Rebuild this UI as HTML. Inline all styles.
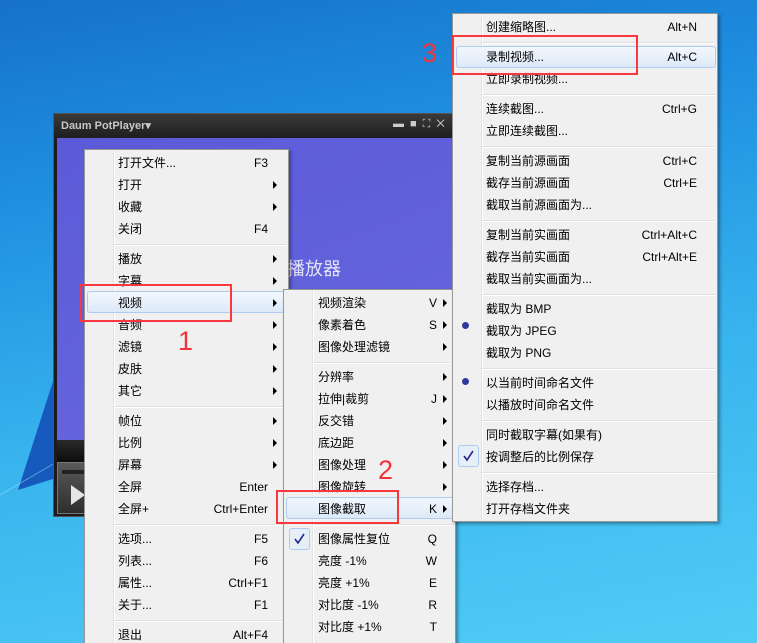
<!DOCTYPE html>
<html><head><meta charset="utf-8"><style>
*{margin:0;padding:0;box-sizing:border-box}
html{width:757px;height:643px;overflow:hidden}
body{width:757px;height:643px;overflow:hidden;position:relative;font-family:"Liberation Sans","Noto Sans CJK SC",sans-serif;font-size:12px;color:#000;
background:linear-gradient(170deg,#1672c8 0%,#1e8ee0 25%,#38b4ee 60%,#52ccf6 100%)}
.abs{position:absolute}
.menu{position:absolute;background:#f0f0f0;border:1px solid #979797;box-shadow:2px 2px 3px rgba(0,0,0,.35)}
.gut{position:absolute;top:0;bottom:0;border-left:1px solid #e2e3e3;border-right:1px solid #fff}
.it{position:absolute;left:0;right:0;height:22px;line-height:22px;white-space:nowrap}
.it .t{position:absolute}
.it .k{position:absolute;text-align:right}
.it .a{position:absolute;top:7px;width:0;height:0;border-top:4px solid transparent;border-bottom:4px solid transparent;border-left:4px solid #000}
.sep{position:absolute;height:2px;border-top:1px solid #e0e0e0;border-bottom:1px solid #fff}
.hl{position:absolute;height:22px;border:1px solid #aeccef;border-radius:3px;background:linear-gradient(#f2f7fd,#dde9f8)}
.red{position:absolute;border:2px solid #f8383c}
.num{position:absolute;color:#f03438;font-size:27px;font-family:"Liberation Sans",sans-serif}
.chk{position:absolute;width:21px;height:22px;border:1px solid #aeccef;border-radius:3px;background:#e6eef8}
</style></head><body>
<svg class="abs" style="left:0;top:0" width="757" height="643"><polygon points="18,490 56,372 56,478" fill="#1450b8" opacity=".9"/><line x1="0" y1="495" x2="60" y2="460" stroke="#9ee0ff" stroke-width="1" opacity=".5"/></svg>
<div class="abs" style="left:53px;top:113px;width:402px;height:404px;background:#1c1c1c;border:1px solid #555"></div>
<div class="abs" style="left:54px;top:114px;width:400px;height:24px;background:linear-gradient(#3a3a3a,#1e1e1e)"></div>
<div class="abs" style="left:61px;top:119px;color:#c8c8c8;font-weight:bold;font-size:11px">Daum PotPlayer▾</div>
<div class="abs" style="left:393px;top:118px;color:#ccc;font-size:11px;letter-spacing:6px">▬■⛶✕</div>
<div class="abs" style="left:57px;top:138px;width:398px;height:302px;background:linear-gradient(160deg,#5c5ad8,#6868e0)"></div>
<div class="abs" style="left:287px;top:255px;color:#e4e4f8;font-size:18px">播放器</div>
<div class="abs" style="left:57px;top:440px;width:398px;height:22px;background:linear-gradient(#2a2a2a,#0c0c0c)"></div>
<div class="abs" style="left:57px;top:462px;width:30px;height:52px;background:linear-gradient(#5a5a5a,#2e2e2e);border:1px solid #777"></div>
<div class="abs" style="left:62px;top:470px;width:25px;height:4px;background:#222"></div>
<svg class="abs" style="left:70px;top:484px" width="16" height="22"><polygon points="1,1 15,11 1,21" fill="#e6e6e6"/></svg>

<div class="menu" style="left:84px;top:149px;width:205px;height:500px">
<div class="gut" style="left:28px"></div>
<div class="hl" style="left:2px;top:141px;width:198px"></div>
<div style="position:absolute;left:33px;top:2px;right:0">
<div class="it" style="top:0"><span class="t">打开文件...</span><span class="k" style="right:20px">F3</span></div>
<div class="it" style="top:22px"><span class="t">打开</span><i class="a" style="right:11px"></i></div>
<div class="it" style="top:44px"><span class="t">收藏</span><i class="a" style="right:11px"></i></div>
<div class="it" style="top:66px"><span class="t">关闭</span><span class="k" style="right:20px">F4</span></div>
<div class="sep" style="top:92px;left:-4px;right:2px"></div>
<div class="it" style="top:96px"><span class="t">播放</span><i class="a" style="right:11px"></i></div>
<div class="it" style="top:118px"><span class="t">字幕</span><i class="a" style="right:11px"></i></div>
<div class="it" style="top:140px"><span class="t">视频</span><i class="a" style="right:11px"></i></div>
<div class="it" style="top:162px"><span class="t">音频</span><i class="a" style="right:11px"></i></div>
<div class="it" style="top:184px"><span class="t">滤镜</span><i class="a" style="right:11px"></i></div>
<div class="it" style="top:206px"><span class="t">皮肤</span><i class="a" style="right:11px"></i></div>
<div class="it" style="top:228px"><span class="t">其它</span><i class="a" style="right:11px"></i></div>
<div class="sep" style="top:254px;left:-4px;right:2px"></div>
<div class="it" style="top:258px"><span class="t">帧位</span><i class="a" style="right:11px"></i></div>
<div class="it" style="top:280px"><span class="t">比例</span><i class="a" style="right:11px"></i></div>
<div class="it" style="top:302px"><span class="t">屏幕</span><i class="a" style="right:11px"></i></div>
<div class="it" style="top:324px"><span class="t">全屏</span><span class="k" style="right:20px">Enter</span></div>
<div class="it" style="top:346px"><span class="t">全屏+</span><span class="k" style="right:20px">Ctrl+Enter</span></div>
<div class="sep" style="top:372px;left:-4px;right:2px"></div>
<div class="it" style="top:376px"><span class="t">选项...</span><span class="k" style="right:20px">F5</span></div>
<div class="it" style="top:398px"><span class="t">列表...</span><span class="k" style="right:20px">F6</span></div>
<div class="it" style="top:420px"><span class="t">属性...</span><span class="k" style="right:20px">Ctrl+F1</span></div>
<div class="it" style="top:442px"><span class="t">关于...</span><span class="k" style="right:20px">F1</span></div>
<div class="sep" style="top:468px;left:-4px;right:2px"></div>
<div class="it" style="top:472px"><span class="t">退出</span><span class="k" style="right:20px">Alt+F4</span></div>
</div></div>

<div class="menu" style="left:283px;top:289px;width:173px;height:360px">
<div class="gut" style="left:28px"></div>
<div class="hl" style="left:2px;top:207px;width:168px"></div>
<div class="chk" style="left:5px;top:238px"></div>
<svg class="abs" style="left:9px;top:243px" width="13" height="12"><path d="M2 6 L5 10 L11 1" fill="none" stroke="#22288e" stroke-width="1.6"/></svg>
<div style="position:absolute;left:34px;top:2px;right:0">
<div class="it" style="top:0"><span class="t">视频渲染</span><span class="k" style="right:18px">V</span><i class="a" style="right:8px"></i></div>
<div class="it" style="top:22px"><span class="t">像素着色</span><span class="k" style="right:18px">S</span><i class="a" style="right:8px"></i></div>
<div class="it" style="top:44px"><span class="t">图像处理滤镜</span><i class="a" style="right:8px"></i></div>
<div class="sep" style="top:70px;left:-4px;right:2px"></div>
<div class="it" style="top:74px"><span class="t">分辨率</span><i class="a" style="right:8px"></i></div>
<div class="it" style="top:96px"><span class="t">拉伸|裁剪</span><span class="k" style="right:18px">J</span><i class="a" style="right:8px"></i></div>
<div class="it" style="top:118px"><span class="t">反交错</span><i class="a" style="right:8px"></i></div>
<div class="it" style="top:140px"><span class="t">底边距</span><i class="a" style="right:8px"></i></div>
<div class="it" style="top:162px"><span class="t">图像处理</span><i class="a" style="right:8px"></i></div>
<div class="it" style="top:184px"><span class="t">图像旋转</span><i class="a" style="right:8px"></i></div>
<div class="it" style="top:206px"><span class="t">图像截取</span><span class="k" style="right:18px">K</span><i class="a" style="right:8px"></i></div>
<div class="sep" style="top:232px;left:-4px;right:2px"></div>
<div class="it" style="top:236px"><span class="t">图像属性复位</span><span class="k" style="right:18px">Q</span></div>
<div class="it" style="top:258px"><span class="t">亮度 -1%</span><span class="k" style="right:18px">W</span></div>
<div class="it" style="top:280px"><span class="t">亮度 +1%</span><span class="k" style="right:18px">E</span></div>
<div class="it" style="top:302px"><span class="t">对比度 -1%</span><span class="k" style="right:18px">R</span></div>
<div class="it" style="top:324px"><span class="t">对比度 +1%</span><span class="k" style="right:18px">T</span></div>
</div></div>

<div class="menu" style="left:452px;top:13px;width:266px;height:509px">
<div class="gut" style="left:28px"></div>
<div class="hl" style="left:3px;top:32px;width:260px"></div>
<div class="abs" style="left:9px;top:308px;width:7px;height:7px;border-radius:50%;background:#2c3a9c"></div>
<div class="abs" style="left:9px;top:364px;width:7px;height:7px;border-radius:50%;background:#2c3a9c"></div>
<div class="chk" style="left:5px;top:431px"></div>
<svg class="abs" style="left:9px;top:436px" width="13" height="12"><path d="M2 6 L5 10 L11 1" fill="none" stroke="#22288e" stroke-width="1.6"/></svg>
<div style="position:absolute;left:33px;top:2px;right:0">
<div class="it" style="top:0"><span class="t">创建缩略图...</span><span class="k" style="right:20px">Alt+N</span></div>
<div class="sep" style="top:26px;left:-4px;right:2px"></div>
<div class="it" style="top:30px"><span class="t">录制视频...</span><span class="k" style="right:20px">Alt+C</span></div>
<div class="it" style="top:52px"><span class="t">立即录制视频...</span></div>
<div class="sep" style="top:78px;left:-4px;right:2px"></div>
<div class="it" style="top:82px"><span class="t">连续截图...</span><span class="k" style="right:20px">Ctrl+G</span></div>
<div class="it" style="top:104px"><span class="t">立即连续截图...</span></div>
<div class="sep" style="top:130px;left:-4px;right:2px"></div>
<div class="it" style="top:134px"><span class="t">复制当前源画面</span><span class="k" style="right:20px">Ctrl+C</span></div>
<div class="it" style="top:156px"><span class="t">截存当前源画面</span><span class="k" style="right:20px">Ctrl+E</span></div>
<div class="it" style="top:178px"><span class="t">截取当前源画面为...</span></div>
<div class="sep" style="top:204px;left:-4px;right:2px"></div>
<div class="it" style="top:208px"><span class="t">复制当前实画面</span><span class="k" style="right:20px">Ctrl+Alt+C</span></div>
<div class="it" style="top:230px"><span class="t">截存当前实画面</span><span class="k" style="right:20px">Ctrl+Alt+E</span></div>
<div class="it" style="top:252px"><span class="t">截取当前实画面为...</span></div>
<div class="sep" style="top:278px;left:-4px;right:2px"></div>
<div class="it" style="top:282px"><span class="t">截取为 BMP</span></div>
<div class="it" style="top:304px"><span class="t">截取为 JPEG</span></div>
<div class="it" style="top:326px"><span class="t">截取为 PNG</span></div>
<div class="sep" style="top:352px;left:-4px;right:2px"></div>
<div class="it" style="top:356px"><span class="t">以当前时间命名文件</span></div>
<div class="it" style="top:378px"><span class="t">以播放时间命名文件</span></div>
<div class="sep" style="top:404px;left:-4px;right:2px"></div>
<div class="it" style="top:408px"><span class="t">同时截取字幕(如果有)</span></div>
<div class="it" style="top:430px"><span class="t">按调整后的比例保存</span></div>
<div class="sep" style="top:456px;left:-4px;right:2px"></div>
<div class="it" style="top:460px"><span class="t">选择存档...</span></div>
<div class="it" style="top:482px"><span class="t">打开存档文件夹</span></div>
</div></div>

<div class="red" style="left:80px;top:284px;width:152px;height:38px"></div>
<div class="red" style="left:276px;top:490px;width:123px;height:34px"></div>
<div class="red" style="left:452px;top:35px;width:186px;height:40px"></div>
<div class="num" style="left:178px;top:326px">1</div>
<div class="num" style="left:378px;top:455px">2</div>
<div class="num" style="left:422px;top:38px">3</div>
</body></html>
